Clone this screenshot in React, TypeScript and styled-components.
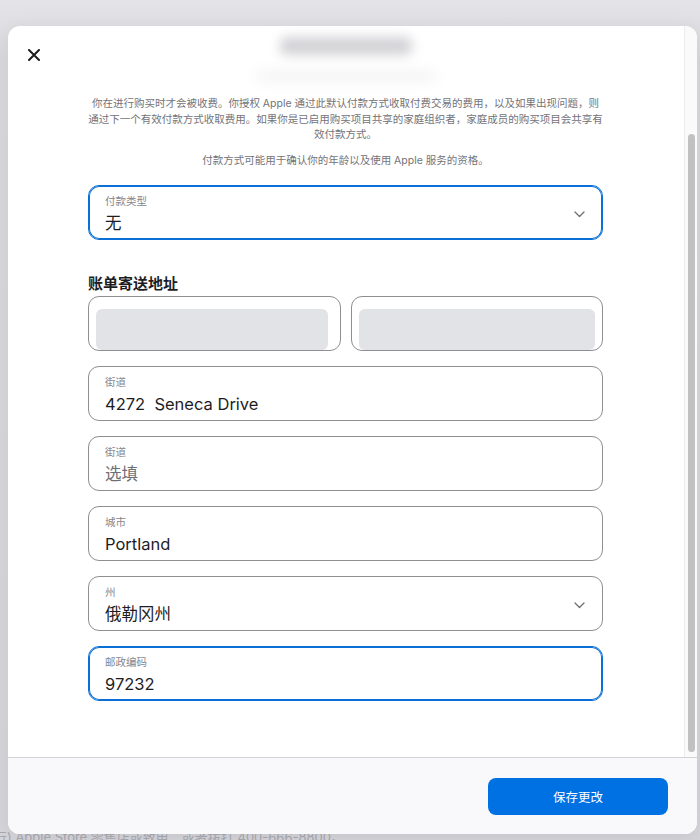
import styled, { createGlobalStyle } from 'styled-components';

const GlobalStyle = createGlobalStyle`
  html, body {
    margin: 0;
    padding: 0;
  }
  body {
    font-family: Inter, "Noto Sans CJK SC", "Noto Sans", sans-serif;
    color: #1d1d1f;
  }
  * {
    box-sizing: border-box;
  }
`;

const Backdrop = styled.div`
  position: relative;
  width: 700px;
  height: 840px;
  overflow: hidden;
  background: linear-gradient(180deg, #e4e4e8 0px, #dadade 60px, #d6d6da 100%);
`;

const BackdropText = styled.div`
  position: absolute;
  left: -6px;
  bottom: -5px;
  font-size: 13px;
  line-height: 16px;
  color: #a9a9b2;
  white-space: nowrap;
`;

const Modal = styled.div`
  position: absolute;
  left: 8px;
  top: 26px;
  width: 689px;
  height: 808px;
  background: #fff;
  border-radius: 12px;
  overflow: hidden;
  display: flex;
  flex-direction: column;
  box-shadow: 0 4px 20px rgba(0, 0, 0, 0.08);
`;

const ScrollArea = styled.div`
  flex: 1;
  display: flex;
  min-height: 0;
`;

const Content = styled.div`
  flex: 1;
  min-width: 0;
  display: flex;
  flex-direction: column;
`;

const Header = styled.div`
  height: 70px;
  display: grid;
  grid-template-columns: 60px 1fr 60px;
  align-items: start;
`;

const CloseButton = styled.button`
  margin: 23px 0 0 20px;
  width: 12px;
  height: 12px;
  padding: 0;
  border: none;
  background: none;
  display: flex;
  cursor: pointer;
`;

const BlurredTitle = styled.div`
  justify-self: center;
  display: flex;
  flex-direction: column;
  align-items: center;
  gap: 18px;
  padding-top: 11px;
`;

const BlurBar = styled.div<{ $w: number; $h: number; $c: string }>`
  width: ${p => p.$w}px;
  height: ${p => p.$h}px;
  background: ${p => p.$c};
  filter: blur(${p => (p.$h > 12 ? 6 : 7)}px);
  border-radius: 6px;
`;

const Body = styled.div`
  padding: 0 81px 0 80px;
  display: flex;
  flex-direction: column;
`;

const Notice = styled.p`
  margin: 0 -10px;
  font-size: 10.5px;
  line-height: 15.5px;
  color: #737378;
  text-align: center;
  white-space: nowrap;

  & + & {
    margin-top: 10.5px;
  }
`;

const Spacer = styled.div<{ $h: number }>`
  height: ${p => p.$h}px;
`;

const FieldBox = styled.div<{ $focused?: boolean }>`
  height: 55px;
  border: 1px solid ${p => (p.$focused ? '#0a6fd6' : '#8e8e93')};
  box-shadow: ${p => (p.$focused ? 'inset 0 0 0 1px #0a6fd6' : 'none')};
  border-radius: 11px;
  padding: 9px 16px 0 16px;
  display: flex;
  align-items: center;
  background: #fff;
`;

const FieldText = styled.div`
  flex: 1;
  display: flex;
  flex-direction: column;
  align-self: flex-start;
`;

const FieldLabel = styled.span`
  font-size: 10.5px;
  line-height: 14px;
  color: #86868b;
`;

const FieldValue = styled.span<{ $placeholder?: boolean }>`
  margin-top: 3px;
  font-size: 16.5px;
  line-height: 22px;
  white-space: pre;
  color: ${p => (p.$placeholder ? '#6e6e73' : '#1d1d1f')};
`;

const Chevron = styled.svg`
  width: 11px;
  height: 7px;
  margin-top: -5px;
  margin-right: 1px;
`;

const SectionTitle = styled.h2`
  margin: 34px 0 2px;
  font-size: 15px;
  line-height: 20px;
  font-weight: 700;
  color: #1d1d1f;
`;

const FieldStack = styled.div`
  display: flex;
  flex-direction: column;
  gap: 15px;
`;

const SplitRow = styled.div`
  display: grid;
  grid-template-columns: 1fr 1fr;
  gap: 10px;
`;

const SkeletonBox = styled.div<{ $inset: [number, number] }>`
  height: 55px;
  border: 1px solid #8e8e93;
  border-radius: 11px;
  padding: 12px ${p => p.$inset[1]}px 0 ${p => p.$inset[0]}px;
  display: flex;
`;

const SkeletonFill = styled.div`
  flex: 1;
  height: 41px;
  background: #e1e3e6;
  border-radius: 6px;
`;

const ScrollTrack = styled.div`
  width: 13px;
  flex-shrink: 0;
  background: #fafafa;
  border-left: 1px solid #ececec;
  padding: 108px 2px 0 3px;
`;

const ScrollThumb = styled.div`
  height: 618px;
  background: #c1c1c1;
  border-radius: 4px;
`;

const Footer = styled.div`
  height: 77px;
  border-top: 1px solid #d2d2d7;
  background: #f9f9fb;
  display: flex;
  justify-content: flex-end;
  align-items: flex-start;
  padding: 20px 29px 0 0;
`;

const SaveButton = styled.button`
  width: 180px;
  height: 37px;
  border: none;
  border-radius: 8px;
  background: #0071e3;
  color: #fff;
  font-family: Inter, "Noto Sans CJK SC", sans-serif;
  font-size: 12.5px;
  cursor: pointer;
`;

function ChevronDown() {
  return (
    <Chevron viewBox="0 0 11 7">
      <path d="M1 1l4.5 4.5L10 1" fill="none" stroke="#6e6e73" strokeWidth="1.3" strokeLinecap="round" strokeLinejoin="round" />
    </Chevron>
  );
}

function Field({ label, value, placeholder, select, focused }: {
  label: string;
  value: string;
  placeholder?: boolean;
  select?: boolean;
  focused?: boolean;
}) {
  return (
    <FieldBox $focused={focused}>
      <FieldText>
        <FieldLabel>{label}</FieldLabel>
        <FieldValue $placeholder={placeholder}>{value}</FieldValue>
      </FieldText>
      {select && <ChevronDown />}
    </FieldBox>
  );
}

export default function App() {
  return (
    <>
      <GlobalStyle />
      <Backdrop>
        <BackdropText>行) Apple Store 零售店或致电，或者拨打 400-666-8800。</BackdropText>
        <Modal>
          <ScrollArea>
            <Content>
              <Header>
                <CloseButton aria-label="关闭">
                  <svg width="12" height="12" viewBox="0 0 12 12">
                    <path d="M1 1l10 10M11 1L1 11" stroke="#1d1d1f" strokeWidth="2" strokeLinecap="round" />
                  </svg>
                </CloseButton>
                <BlurredTitle>
                  <BlurBar $w={132} $h={18} $c="#d2d2d6" />
                  <BlurBar $w={180} $h={7} $c="#ededef" />
                </BlurredTitle>
                <div />
              </Header>

              <Body>
                <Notice>
                  你在进行购买时才会被收费。你授权 Apple 通过此默认付款方式收取付费交易的费用，以及如果出现问题，则
                  <br />
                  通过下一个有效付款方式收取费用。如果你是已启用购买项目共享的家庭组织者，家庭成员的购买项目会共享有
                  <br />
                  效付款方式。
                </Notice>
                <Notice>付款方式可能用于确认你的年龄以及使用 Apple 服务的资格。</Notice>

                <Spacer $h={16} />
                <Field label="付款类型" value="无" select focused />

                <SectionTitle>账单寄送地址</SectionTitle>
                <FieldStack>
                  <SplitRow>
                    <SkeletonBox $inset={[7, 12]}>
                      <SkeletonFill />
                    </SkeletonBox>
                    <SkeletonBox $inset={[7, 7]}>
                      <SkeletonFill />
                    </SkeletonBox>
                  </SplitRow>
                  <Field label="街道" value="4272  Seneca Drive" />
                  <Field label="街道" value="选填" placeholder />
                  <Field label="城市" value="Portland" />
                  <Field label="州" value="俄勒冈州" select />
                  <Field label="邮政编码" value="97232" focused />
                </FieldStack>
              </Body>
            </Content>
            <ScrollTrack>
              <ScrollThumb />
            </ScrollTrack>
          </ScrollArea>
          <Footer>
            <SaveButton>保存更改</SaveButton>
          </Footer>
        </Modal>
      </Backdrop>
    </>
  );
}
